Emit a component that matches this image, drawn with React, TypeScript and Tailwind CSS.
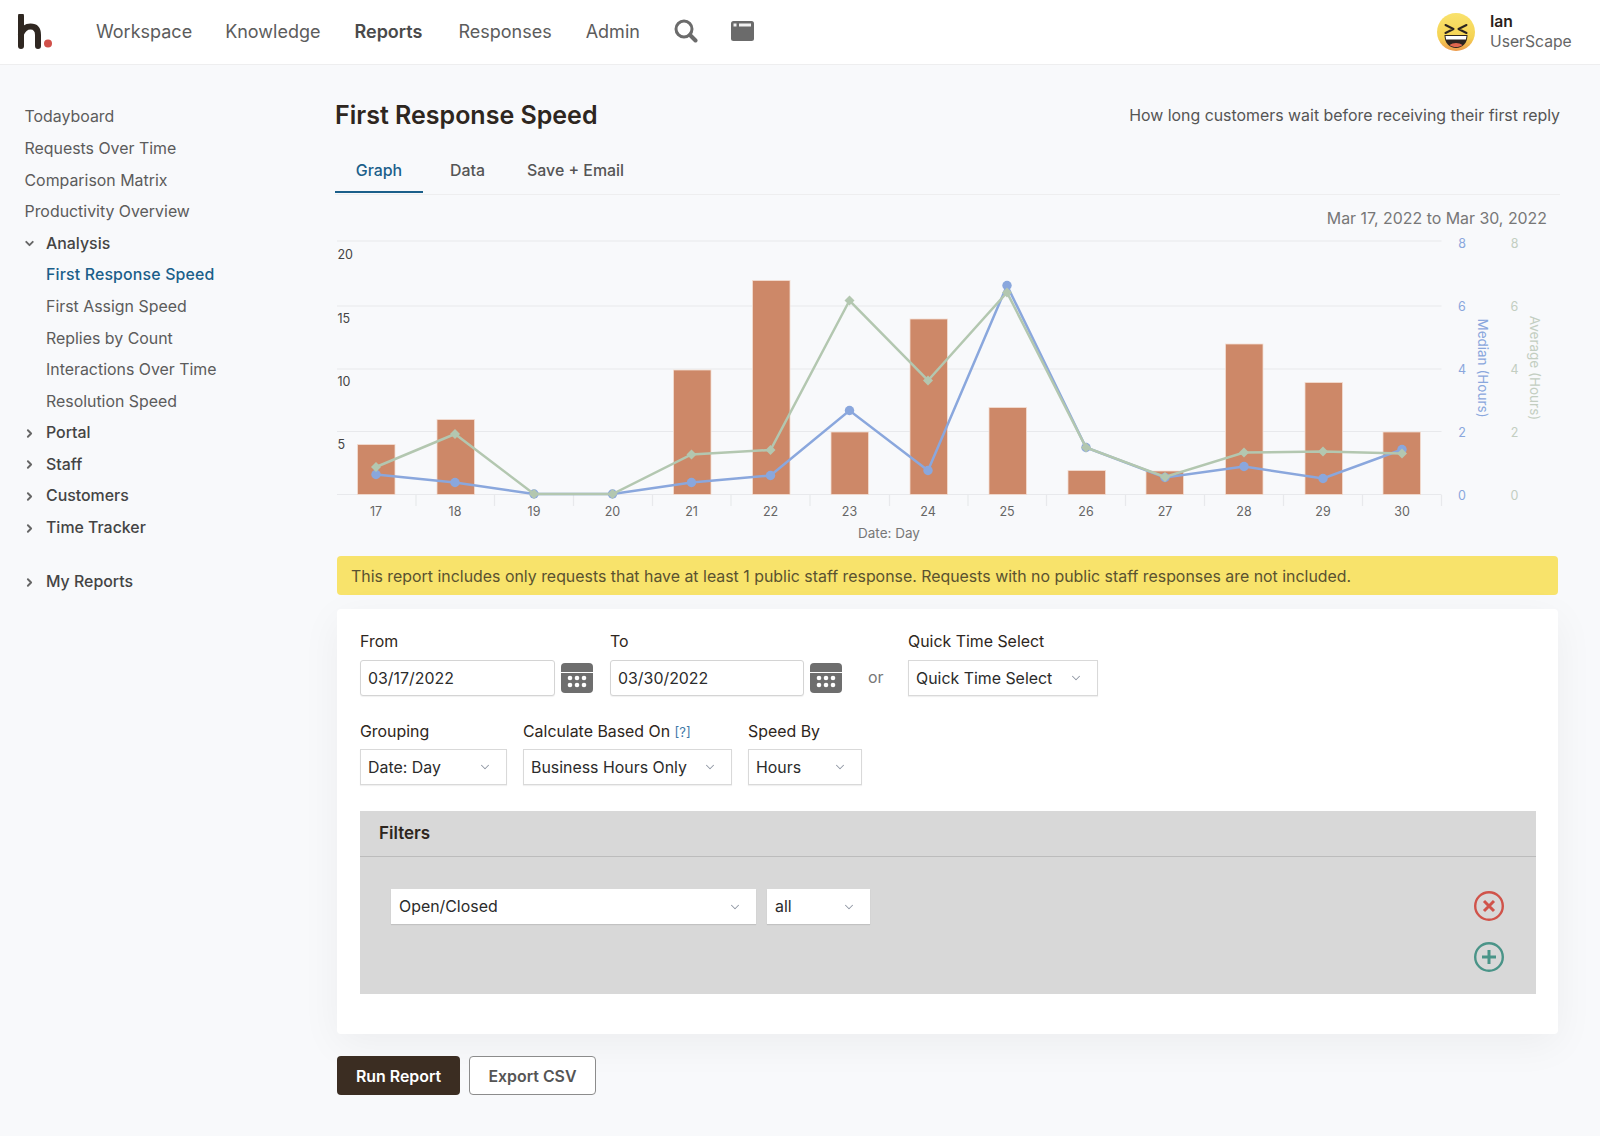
import { ChevronDown, ChevronRight } from "lucide-react";

const topNav = [
  { label: "Workspace", x: "ml-[43px]" },
  { label: "Knowledge", x: "ml-[33px]" },
  { label: "Reports", x: "ml-[34px]", bold: true },
  { label: "Responses", x: "ml-[36px]" },
  { label: "Admin", x: "ml-[34px]" },
];

const categories = [17, 18, 19, 20, 21, 22, 23, 24, 25, 26, 27, 28, 29, 30];
const pointX = [376, 455, 534, 612.5, 691.5, 770.5, 849.5, 928, 1007, 1086, 1165, 1244, 1323, 1402];
const tickX = [416, 494.5, 573.5, 652.5, 731, 810, 889.5, 968, 1046.5, 1125.5, 1204.5, 1283.5, 1362.5, 1441.5];
const bars = [
  { x: 357.5, top: 444.5 },
  { x: 437, top: 419.5 },
  { x: 673.5, top: 370 },
  { x: 752.5, top: 280.5 },
  { x: 831, top: 432 },
  { x: 910, top: 319 },
  { x: 989, top: 407.5 },
  { x: 1068, top: 470.5 },
  { x: 1146, top: 471 },
  { x: 1225.5, top: 344 },
  { x: 1305, top: 382.5 },
  { x: 1383, top: 432 },
];
const medianY = [474.5, 482.5, 494, 494, 482.5, 475.5, 410.5, 470.5, 285.5, 447.5, 477.5, 466.5, 478.5, 449.5];
const averageY = [467, 434, 494, 494, 454.5, 450, 300.5, 380.5, 292.5, 447.5, 477, 452.5, 451.5, 453.5];

function line(ys: number[]) {
  return ys.map((y, i) => `${pointX[i]},${y}`).join(" ");
}

function Chart() {
  return (
    <svg viewBox="335 235 1225 315" className="block h-[315px] w-[1225px]">
      {[241, 306, 369, 431.5, 494.5].map((y) => (
        <line key={y} x1="337" x2="1441.5" y1={y} y2={y} stroke="#e8e9ec" strokeWidth="1.2" />
      ))}
      {tickX.map((x) => (
        <line key={x} x1={x} x2={x} y1="495" y2="506" stroke="#e8e9ec" strokeWidth="1.2" />
      ))}
      {bars.map((b) => (
        <rect
          key={b.x}
          x={b.x}
          y={b.top}
          width="37.5"
          height={494.5 - b.top}
          fill="#cd8868"
          stroke="#f3ded3"
          strokeWidth="0.8"
        />
      ))}
      <polyline points={line(medianY)} fill="none" stroke="#8aa7dd" strokeWidth="2.5" />
      {medianY.map((y, i) => (
        <circle key={i} cx={pointX[i]} cy={y} r="4.7" fill="#8aa7dd" />
      ))}
      <polyline points={line(averageY)} fill="none" stroke="#b3c7b0" strokeWidth="2.5" />
      {averageY.map((y, i) => (
        <polygon
          key={i}
          points={`${pointX[i]},${y - 5} ${pointX[i] + 5},${y} ${pointX[i]},${y + 5} ${pointX[i] - 5},${y}`}
          fill="#b3c7b0"
        />
      ))}
      <g fontSize="12.5" fill="#444">
        <text x="337.5" y="259">20</text>
        <text x="337.5" y="323">15</text>
        <text x="337.5" y="386">10</text>
        <text x="337.5" y="449">5</text>
      </g>
      {[8, 6, 4, 2, 0].map((n, i) => (
        <g key={n} fontSize="12.5" textAnchor="middle">
          <text x="1462" y={[248, 310.5, 373.5, 437, 500][i]} fill="#8aa7dd">{n}</text>
          <text x="1514.5" y={[248, 310.5, 373.5, 437, 500][i]} fill="#c3cec1">{n}</text>
        </g>
      ))}
      <text x="0" y="0" transform="translate(1478 368) rotate(90)" textAnchor="middle" fontSize="13.5" fill="#8aa7dd">
        Median (Hours)
      </text>
      <text x="0" y="0" transform="translate(1530 368) rotate(90)" textAnchor="middle" fontSize="13.5" fill="#c3cec1">
        Average (Hours)
      </text>
      {categories.map((c, i) => (
        <text key={c} x={pointX[i]} y="515.5" textAnchor="middle" fontSize="12.5" fill="#666">
          {c}
        </text>
      ))}
      <text x="889" y="538" textAnchor="middle" fontSize="13.5" fill="#777">Date: Day</text>
    </svg>
  );
}

function LaughEmoji() {
  return (
    <svg viewBox="0 0 38 38" className="h-[38px] w-[38px]">
      <defs>
        <linearGradient id="face" x1="0" y1="0" x2="0" y2="1">
          <stop offset="0" stopColor="#f9e26d" />
          <stop offset="0.65" stopColor="#f5d353" />
          <stop offset="1" stopColor="#ec9a4c" />
        </linearGradient>
      </defs>
      <circle cx="19" cy="19" r="19" fill="url(#face)" />
      <path d="M8.500 12l8 4-8 4M29.500 12l-8 4 8 4" fill="none" stroke="#2c2420" strokeWidth="2" strokeLinecap="round" strokeLinejoin="round" />
      <path d="M7.500 22h23c0 8-5 13-11.500 13S7.500 30 7.500 22z" fill="#2c2420" />
      <path d="M8.500 23h21l-.6 3.500H9.100z" fill="#fff" />
      <path d="M12.500 32c3.500-2.800 9.500-2.800 13 0-3.500 2.700-9.500 2.700-13 0z" fill="#e0674f" />
    </svg>
  );
}

function CalendarIcon() {
  return (
    <svg viewBox="0 0 32 30" className="h-[30px] w-[32px] shrink-0">
      <path d="M4 0h24a4 4 0 014 4v5H0V4a4 4 0 014-4z" fill="#6e6e6e" />
      <path d="M0 10h32v16a4 4 0 01-4 4H4a4 4 0 01-4-4z" fill="#6e6e6e" />
      {[8, 15, 22].map((x) =>
        [15, 22].map((y) => <circle key={`${x}-${y}`} cx={x + 1} cy={y} r="2.300" fill="#fff" />),
      )}
    </svg>
  );
}

function Select({ label, className }: { label: string; className: string }) {
  return (
    <div className={`flex h-[36px] items-center justify-between border border-[#d9d9d9] bg-white pl-[7px] pr-[14px] text-[15.9px] text-[#2b2b2b] shadow-[0_1px_1px_rgba(0,0,0,0.06)] ${className}`}>
      <span className="pt-[2px]">{label}</span>
      <ChevronDown className="h-[14px] w-[14px] text-[#8f96a3]" strokeWidth={1.75} />
    </div>
  );
}

function SideLink({ label, child, active }: { label: string; child?: boolean; active?: boolean }) {
  return (
    <div
      className={`flex h-[31.6px] items-center text-[15.9px] ${child ? "pl-[46px]" : "pl-[24.500px]"} ${
        active ? "font-medium tracking-[0.01em] text-[#1b5f8a]" : "text-[#5c5c5c]"
      }`}
    >
      {label}
    </div>
  );
}

function SideGroup({ label, open }: { label: string; open?: boolean }) {
  return (
    <div className="flex h-[31.6px] items-center pl-[23px] text-[15.9px] font-medium text-[#444]">
      <span className="flex w-[23px] items-center">
        {open ? (
          <ChevronDown className="h-[13px] w-[13px] text-[#666]" strokeWidth={3.500} />
        ) : (
          <ChevronRight className="h-[13px] w-[13px] text-[#666]" strokeWidth={3.500} />
        )}
      </span>
      {label}
    </div>
  );
}

export default function App() {
  return (
    <div className="min-h-screen bg-[#f8f9fb] font-['Inter',sans-serif] text-[#2e2620]">
      <header className="flex h-[65px] items-center border-b border-[#eeeeef] bg-white">
        <svg viewBox="0 0 36 36" className="ml-[17px] h-[36px] w-[36px]">
          <path d="M4 2v30" stroke="#2f2721" strokeWidth="6" strokeLinecap="round" fill="none" />
          <path d="M4 20c2-5 6-7.500 9.500-7.500 5 0 7.500 3 7.500 8.500v11" stroke="#2f2721" strokeWidth="6" strokeLinecap="round" fill="none" />
          <circle cx="31" cy="29.500" r="4" fill="#d1504a" />
        </svg>
        {topNav.map((n) => (
          <span
            key={n.label}
            className={`${n.x} pb-[2px] text-[18px] ${n.bold ? "font-semibold text-[#4a4a4a]" : "text-[#5c5c5c]"}`}
          >
            {n.label}
          </span>
        ))}
        <svg viewBox="0 0 24 24" className="mb-[2px] ml-[34px] h-[24px] w-[24px]">
          <circle cx="10" cy="10" r="8" fill="none" stroke="#6b6b6b" strokeWidth="3" />
          <path d="M16 16l5.500 5.500" stroke="#6b6b6b" strokeWidth="4" strokeLinecap="round" />
        </svg>
        <svg viewBox="0 0 23 20" className="mb-[2px] ml-[33px] h-[20px] w-[23px]">
          <rect width="23" height="20" rx="2.500" fill="#6b6b6b" />
          <rect x="2.500" y="2.500" width="3" height="3" fill="#f2f2f2" />
          <rect x="8" y="2.500" width="12" height="3" fill="#f2f2f2" />
        </svg>
        <div className="ml-auto flex items-center">
          <LaughEmoji />
          <div className="ml-[15px] mr-[28px] flex w-[82px] flex-col text-[15.7px] leading-[20px]">
            <span className="font-semibold text-[#2b1f1a]">Ian</span>
            <span className="text-[#666]">UserScape</span>
          </div>
        </div>
      </header>

      <div className="flex">
        <aside className="w-[335px] shrink-0 pt-[36.500px]">
          <SideLink label="Todayboard" />
          <SideLink label="Requests Over Time" />
          <SideLink label="Comparison Matrix" />
          <SideLink label="Productivity Overview" />
          <SideGroup label="Analysis" open />
          <SideLink label="First Response Speed" child active />
          <SideLink label="First Assign Speed" child />
          <SideLink label="Replies by Count" child />
          <SideLink label="Interactions Over Time" child />
          <SideLink label="Resolution Speed" child />
          <SideGroup label="Portal" />
          <SideGroup label="Staff" />
          <SideGroup label="Customers" />
          <SideGroup label="Time Tracker" />
          <div className="h-[22.500px]" />
          <SideGroup label="My Reports" />
        </aside>

        <main className="w-[1225px] pt-[33px]">
          <div className="flex h-[36px] items-center justify-between">
            <h1 className="text-[25px] font-semibold text-[#2e2620]">First Response Speed</h1>
            <span className="text-[15.9px] text-[#555]">How long customers wait before receiving their first reply</span>
          </div>

          <div className="flex h-[61px] items-end border-b border-[#eeeeef] text-[15.9px] font-medium text-[#555]">
            <div className="mb-[1px] flex h-[38px] w-[88px] items-start justify-center border-b-2 border-[#1b5f8a] pt-[4px] text-[#1b5f8a]">
              Graph
            </div>
            <div className="ml-[27px] h-[39px] pt-[4px]">Data</div>
            <div className="ml-[42px] h-[39px] pt-[4px]">Save + Email</div>
          </div>

          <div className="flex h-[40px] items-center justify-end pr-[13px] pt-[8px] text-[15.9px] text-[#777]">
            Mar 17, 2022 to Mar 30, 2022
          </div>

          <Chart />

          <div className="mx-[2px] mt-[6px] flex h-[39px] items-center rounded-[4px] bg-[#f8e36b] pl-[14px] pt-[2px] text-[15.9px] text-[#5a5230]">
            This report includes only requests that have at least 1 public staff response. Requests with no public staff responses are not included.
          </div>

          <section className="mx-[2px] mt-[14px] rounded-[4px] bg-white pb-[40px] pl-[23px] pr-[22px] pt-[20px] shadow-[0_10px_40px_rgba(0,0,0,0.05)]">
            <div className="flex items-end text-[15.9px]">
              <div>
                <div className="mb-[7px] h-[24px] leading-[26px]">From</div>
                <div className="flex items-center">
                  <input
                    readOnly
                    value="03/17/2022"
                    className="h-[36px] w-[195px] rounded-[3px] border border-[#d4d4d4] bg-white px-[7px] text-[15.9px] text-[#2b2b2b] shadow-[0_1px_1px_rgba(0,0,0,0.06)]"
                  />
                  <span className="ml-[6px]"><CalendarIcon /></span>
                </div>
              </div>
              <div className="ml-[17px]">
                <div className="mb-[7px] h-[24px] leading-[26px]">To</div>
                <div className="flex items-center">
                  <input
                    readOnly
                    value="03/30/2022"
                    className="h-[36px] w-[194px] rounded-[3px] border border-[#d4d4d4] bg-white px-[7px] text-[15.9px] text-[#2b2b2b] shadow-[0_1px_1px_rgba(0,0,0,0.06)]"
                  />
                  <span className="ml-[6px]"><CalendarIcon /></span>
                </div>
              </div>
              <span className="ml-[26px] flex h-[36px] w-[40px] items-center text-[#777]">or</span>
              <div>
                <div className="mb-[7px] h-[24px] leading-[26px]">Quick Time Select</div>
                <Select label="Quick Time Select" className="w-[190px]" />
              </div>
            </div>

            <div className="mt-[23px] flex gap-[16px] text-[15.9px]">
              <div>
                <div className="mb-[6px] h-[24px] leading-[26px]">Grouping</div>
                <Select label="Date: Day" className="w-[147px]" />
              </div>
              <div>
                <div className="mb-[6px] h-[24px] leading-[26px]">
                  Calculate Based On <span className="text-[13px] text-[#3f78a8]">[?]</span>
                </div>
                <Select label="Business Hours Only" className="w-[209px]" />
              </div>
              <div>
                <div className="mb-[6px] h-[24px] leading-[26px]">Speed By</div>
                <Select label="Hours" className="w-[114px]" />
              </div>
            </div>

            <div className="mt-[26px] bg-[#d8d8d8]">
              <div className="flex h-[46px] items-center border-b border-[#bcbcbc] pl-[19px] pt-[1px] text-[17px] font-semibold text-[#2e2620]">
                Filters
              </div>
              <div className="flex justify-between pb-[22px] pl-[31px] pr-[32px] pt-[32px]">
                <div className="flex gap-[11px]">
                  <div className="flex h-[35px] w-[365px] items-center justify-between bg-white pl-[8px] pr-[14px] text-[15.9px] text-[#2b2b2b] shadow-[0_1px_1px_rgba(0,0,0,0.1)]">
                    Open/Closed
                    <ChevronDown className="h-[14px] w-[14px] text-[#8f96a3]" strokeWidth={1.75} />
                  </div>
                  <div className="flex h-[35px] w-[103px] items-center justify-between bg-white pl-[8px] pr-[14px] text-[15.9px] text-[#2b2b2b] shadow-[0_1px_1px_rgba(0,0,0,0.1)]">
                    all
                    <ChevronDown className="h-[14px] w-[14px] text-[#8f96a3]" strokeWidth={1.75} />
                  </div>
                </div>
                <div className="flex flex-col gap-[21px] pt-[2px]">
                  <svg viewBox="0 0 30 30" className="h-[30px] w-[30px]">
                    <circle cx="15" cy="15" r="13.800" fill="none" stroke="#d0534a" strokeWidth="2.400" />
                    <path d="M10 10l10 10M20 10L10 20" stroke="#d0534a" strokeWidth="3" />
                  </svg>
                  <svg viewBox="0 0 30 30" className="h-[30px] w-[30px]">
                    <circle cx="15" cy="15" r="13.800" fill="none" stroke="#4a9488" strokeWidth="2.400" />
                    <path d="M15 8v14M8 15h14" stroke="#4a9488" strokeWidth="3" />
                  </svg>
                </div>
              </div>
            </div>
          </section>

          <div className="mx-[2px] mb-[39px] mt-[22px] flex gap-[9px]">
            <button type="button" className="h-[39px] w-[123px] rounded-[4px] bg-[#3b2d22] pt-[2px] text-[15.9px] font-semibold text-white">
              Run Report
            </button>
            <button type="button" className="h-[39px] w-[127px] rounded-[4px] border border-[#8c8c8c] bg-white pt-[2px] text-[15.9px] font-semibold text-[#555]">
              Export CSV
            </button>
          </div>
        </main>
      </div>
    </div>
  );
}
